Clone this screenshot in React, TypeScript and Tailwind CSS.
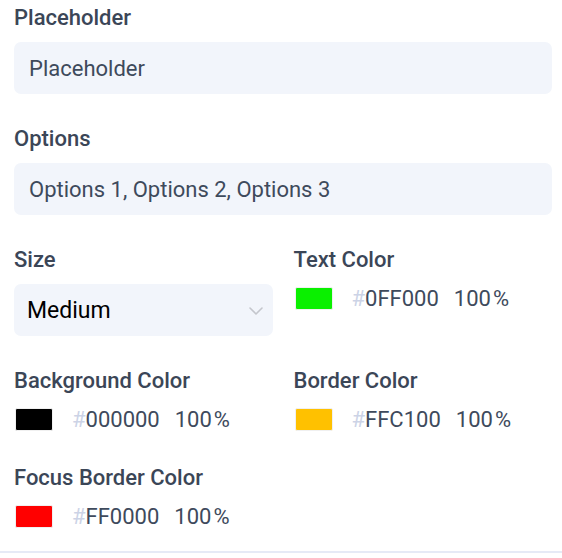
import { ChevronDown } from "lucide-react";

function Label({ text }: { text: string }) {
  return (
    <div className="text-[22px] leading-6 pt-px font-medium text-[#3b4657]">
      {text}
    </div>
  );
}

function TextField({ label, value }: { label: string; value: string }) {
  return (
    <div className="flex flex-col gap-[12px]">
      <Label text={label} />
      <div className="h-[52px] rounded-[7px] bg-[#f2f5fb] flex items-center px-[15px] text-[22px] text-[#3e4a5c]">
        {value}
      </div>
    </div>
  );
}

function ColorField({ label, hex, color }: { label: string; hex: string; color: string }) {
  return (
    <div className="flex flex-col gap-[12px]">
      <Label text={label} />
      <div className="h-[28px] flex items-center">
        <div
          className="w-[38px] h-[23px] rounded-[2px] border border-[#f0f0f0] ml-px"
          style={{ backgroundColor: color }}
        />
        <div className="ml-[19px] text-[22px] text-[#3e4a5c] flex items-center">
          <span className="text-[#ccd3e6]">#</span>
          <span>{hex}</span>
          <span className="ml-[15px]">100</span>
          <span className="ml-[2px]">%</span>
        </div>
      </div>
    </div>
  );
}

export default function App() {
  return (
    <div className="w-[562px] h-[558px] bg-white" style={{ fontFamily: "Roboto, 'Liberation Sans', sans-serif" }}>
      <div className="pl-[14px] pr-[10px] pt-[5px] pb-[21px] flex flex-col gap-[32px]">
        <TextField label="Placeholder" value="Placeholder" />
        <TextField label="Options" value="Options 1, Options 2, Options 3" />
        <div className="grid grid-cols-2 gap-x-[21px] gap-y-[32px]">
          <div className="flex flex-col gap-[12px]">
            <Label text="Size" />
            <div className="h-[52px] rounded-[7px] bg-[#f2f5fb] flex items-center justify-between pl-[13px] pr-[5px]">
              <span className="text-[23px] pt-[3px] text-black">Medium</span>
              <ChevronDown size={24} strokeWidth={1.6} className="text-[#c4c6cc] mt-[1px]" />
            </div>
          </div>
          <ColorField label="Text Color" hex="0FF000" color="#0af000" />
          <ColorField label="Background Color" hex="000000" color="#000000" />
          <ColorField label="Border Color" hex="FFC100" color="#ffc100" />
          <ColorField label="Focus Border Color" hex="FF0000" color="#ff0000" />
        </div>
      </div>
      <div className="h-[2px] bg-[#e6eaf6]" />
    </div>
  );
}
